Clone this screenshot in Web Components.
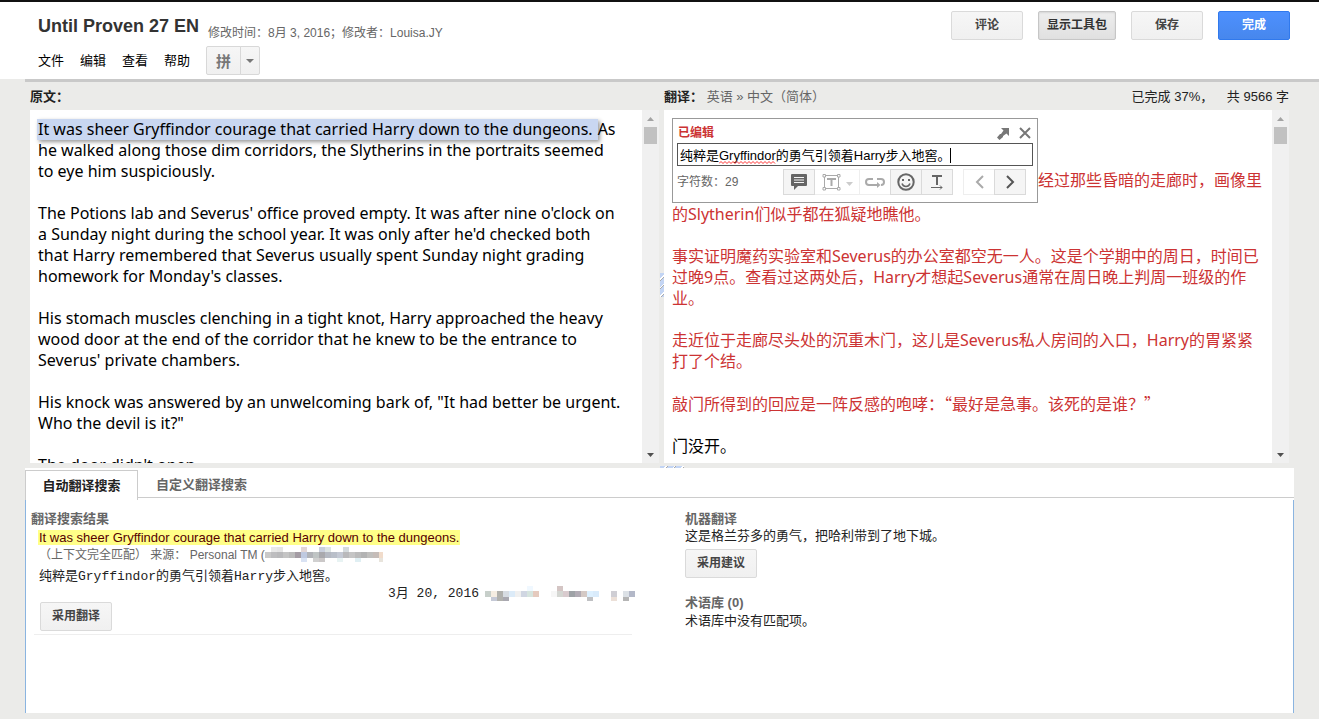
<!DOCTYPE html>
<html lang="zh-CN">
<head>
<meta charset="utf-8">
<title>Until Proven 27 EN</title>
<style>
  html, body { margin: 0; height: 100%; }
  body {
    background: #ebebe9; color: #222; font: 13px/18px "Liberation Sans", "Noto Sans CJK SC", sans-serif;
    --line: #ccc; --muted: #666; --red: #cc3333;
  }
</style>
</head>
<body>
<translator-app></translator-app>

<script>
const define = (name, html, setup) => customElements.define(name, class extends HTMLElement {
  constructor() {
    super();
    const t = document.createElement('template');
    t.innerHTML = html;
    this.attachShadow({ mode: 'open' }).append(t.content.cloneNode(true));
  }
  connectedCallback() { if (setup) setup(this, this.shadowRoot); }
});

/* Standard push button; kind = "primary" | "pressed" */
define('push-button', `
<style>
  :host { display: block; }
  button {
    box-sizing: border-box; display: block; min-width: 72px; height: 29px; padding: 0 8px;
    border: 1px solid #dadada; border-radius: 2px; color: #444;
    background: linear-gradient(#f6f6f6, #f0f0f0);
    font: bold 12px/27px "Liberation Sans", "Noto Sans CJK SC", sans-serif; white-space: nowrap;
  }
  :host([kind=pressed]) button {
    border-color: #c6c6c6; color: #333; background: linear-gradient(#eee, #e0e0e0);
    box-shadow: inset 0 1px 2px rgba(0,0,0,.1);
  }
  :host([kind=primary]) button {
    border-color: #3079ed; color: #fff; background: linear-gradient(#4d90fe, #4787ed);
  }
</style>
<button type="button"><slot></slot></button>`);

define('doc-header', `
<style>
  :host { display: flex; justify-content: space-between; align-items: flex-start;
    box-sizing: border-box; min-height: 79px; border-top: 2px solid #111; background: #fff;
    padding: 9px 29px 4px 38px; }
  .title { display: flex; align-items: baseline; gap: 9px; margin-top: 4px; height: 31px; }
  h1 { margin: 0; font: bold 18px/22px "Liberation Sans", sans-serif; color: #333; }
  .meta { font-size: 12px; color: var(--muted); position: relative; top: 5px; }
  nav { display: flex; align-items: center; gap: 16px; }
  nav a { color: #000; text-decoration: none; }
  .ime { display: flex; }
  .ime button { box-sizing: border-box; height: 29px; padding: 0; border: 1px solid #d8d8d8;
    background: linear-gradient(#f6f6f6, #f0f0f0); color: #777; border-radius: 2px 0 0 2px;
    width: 35px; font: bold 15px/24px "Noto Sans CJK SC", sans-serif; }
  .ime button + button { width: 20px; margin-left: -1px; border-radius: 0 2px 2px 0; }
  .ime svg { display: block; margin: auto; }
  .actions { display: flex; gap: 15px; }
</style>
<div>
  <div class="title"><h1>Until Proven 27 EN</h1><span class="meta">修改时间&#xFF1A;8月 3, 2016&#xFF1B;修改者&#xFF1A;Louisa.JY</span></div>
  <nav>
    <a href="#file">文件</a><a href="#edit">编辑</a><a href="#view">查看</a><a href="#help">帮助</a>
    <span class="ime"><button type="button">拼</button><button type="button" aria-label="输入法"><svg width="8" height="4"><path d="M0 0h8L4 4z" fill="#777"/></svg></button></span>
  </nav>
</div>
<div class="actions">
  <push-button>评论</push-button><push-button kind="pressed">显示工具包</push-button>
  <push-button>保存</push-button><push-button kind="primary">完成</push-button>
</div>`);

define('scroll-track', `
<style>
  :host { display: flex; flex-direction: column; align-items: center; box-sizing: border-box;
    width: 17px; padding: 7px 0 6px; background: #f0f0f0; }
  i { width: 13px; height: 17px; margin: 6px 0 auto; background: #c1c1c1; }
</style>
<svg width="7" height="4"><path d="M0 4h7L3.5 0z" fill="#a3a3a3"/></svg><i></i>
<svg width="7" height="4"><path d="M0 0h7L3.5 4z" fill="#505050"/></svg>`);

define('text-pane', `
<style>
  :host { display: flex; flex-direction: column; min-width: 0; min-height: 0; }
  .head { display: flex; justify-content: space-between; box-sizing: border-box; height: 28px; padding-top: 1px; line-height: 28px; white-space: nowrap; }
  .view { display: flex; flex: 1; min-height: 0; background: #fff; }
  .text { flex: 1; min-width: 0; overflow: hidden; padding: 9px 0 0 8px; color: #000;
    font: 16px/21px "Noto Sans", "Noto Sans CJK SC", sans-serif; white-space: nowrap; }
</style>
<div class="head"><slot name="label"></slot><slot name="status"></slot></div>
<div class="view"><div class="text"><slot></slot></div><scroll-track></scroll-track></div>`);

define('segment-editor', `
<style>
  :host { display: inline-block; margin: -1px 0 1px; box-sizing: border-box; width: 366px; height: 85px;
    border: 1px solid #999; padding: 4px; background: #fff; white-space: nowrap;
    font: 12px/18px "Liberation Sans", "Noto Sans CJK SC", sans-serif; color: var(--muted); }
  .row { display: flex; align-items: center; }
  .top { height: 20px; gap: 9px; padding: 0 2px 0 1px; }
  label { flex: 1; font-weight: bold; color: var(--red); }
  button { box-sizing: border-box; padding: 0; border: 0; background: none; display: grid; place-items: center; }
  .field { position: relative; }
  input { display: block; box-sizing: border-box; width: 100%; height: 23px; padding: 0 2px;
    border: 1px solid #555; outline: 0; border-radius: 0; background: #fff; color: #000;
    font: 13px/20px "Liberation Sans", "Noto Sans CJK SC", sans-serif; }
  .wave { position: absolute; left: 42px; top: 18px; }
  .caret { position: absolute; left: 273px; top: 5px; width: 1px; height: 15px; background: #000; }
  .tools { margin-top: 3px; padding-right: 7px; }
  .count { flex: 1; }
  .group { display: flex; margin-left: 11px; }
  .group button { width: 32px; height: 26px; margin-left: -1px; border: 1px solid #eee; }
  .group .on { border-color: #dadada; background: #f5f5f5; position: relative; }
  .group .wide { width: 46px; }
</style>
<div class="row top">
  <label for="seg">已编辑</label>
  <button type="button" aria-label="展开"><svg width="13" height="13"><path d="M4 1h8v8L9.500 6.500 6 9v1l-3.500 3L0 10.500 3 7h1l2.500-3.500z" fill="#777"/></svg></button>
  <button type="button" aria-label="关闭"><svg width="12" height="12"><path d="M1 1l10 10M11 1L1 11" stroke="#777" stroke-width="2"/></svg></button>
</div>
<div class="field">
  <input id="seg" value="纯粹是Gryffindor的勇气引领着Harry步入地窖。" spellcheck="false">
  <svg class="wave" width="57" height="3"><path d="M0 2.5l2-2 2 2 2-2 2 2 2-2 2 2 2-2 2 2 2-2 2 2 2-2 2 2 2-2 2 2 2-2 2 2 2-2 2 2 2-2 2 2 2-2 2 2 2-2 2 2 2-2 2 2 2-2 2 2" fill="none" stroke="#f33" stroke-width="1"/></svg>
  <span class="caret"></span>
</div>
<div class="row tools">
  <span class="count">字符数&#xFF1A;29</span>
  <span class="group">
    <button type="button" class="on" aria-label="评论"><svg width="16" height="16"><path d="M1 0h14q1 0 1 1v10q0 1-1 1H7l-4 4v-4H1q-1 0-1-1V1q0-1 1-1z" fill="#666"/><path d="M3 3.500h10M3 6h10M3 8.500h10" stroke="#f5f5f5"/></svg></button>
    <button type="button" class="wide" aria-label="标记"><svg width="31" height="18" fill="none" stroke="#aaa"><path d="M3.500 2.500h12M3.500 15.500h12M2.500 3v12M16.500 3v12"/><path d="M1 1.500h2.500v2.500H1zM15.500 1.500h2.500v2.500h-2.500zM1 14.500h2.500v2.500H1zM15.500 14.500h2.500v2.500h-2.500z" fill="#fff"/><path d="M5 6h9M9.500 6v7" stroke-width="2"/><path d="M24 9h7l-3.500 4z" fill="#ccc" stroke="none"/></svg></button>
    <button type="button" aria-label="合并"><svg width="20" height="12" fill="none" stroke="#aaa" stroke-width="2"><path d="M8 3H4Q1 3 1 6t3 3h9M12 3h4q3 0 3 3t-3 3"/><path d="M12 6v6l3.500-3z" fill="#aaa" stroke="none"/></svg></button>
    <button type="button" class="on" aria-label="表情"><svg width="18" height="18" fill="none" stroke="#666" stroke-width="2"><circle cx="9" cy="9" r="7.700"/><path d="M5 10.500q1 3 4 3t4-3" stroke-width="1.500"/><path d="M5 7h2M11 7h2"/></svg></button>
    <button type="button" class="on" aria-label="文字方向"><svg width="14" height="16" fill="none" stroke="#666"><path d="M2 2h10M7 2v9" stroke-width="2"/><path d="M1 13.500h11M10 11.500l2 2-2 2"/></svg></button>
  </span>
  <span class="group">
    <button type="button" aria-label="上一个"><svg width="9" height="14" fill="none" stroke="#aaa" stroke-width="2"><path d="M8 1L2 7l6 6"/></svg></button>
    <button type="button" class="on" aria-label="下一个"><svg width="9" height="14" fill="none" stroke="#555" stroke-width="2"><path d="M1 1l6 6-6 6"/></svg></button>
  </span>
</div>`);

/* Row of colour blocks hiding a personal name. Each cell: "column,row,colour". */
define('masked-name', `<style>:host { display: inline-block; } svg { display: block; }</style><svg aria-hidden="true"></svg>`,
  (el, root) => {
    const svg = root.querySelector('svg');
    const cells = el.getAttribute('cells').split(' ').map(c => c.split(','));
    svg.setAttribute('width', el.getAttribute('width'));
    svg.setAttribute('height', 16);
    const y = [0, 5, 11], h = [5, 6, 4];
    svg.innerHTML = cells.map(([c, r, f]) => `<rect x="${c * 6}" y="${y[r]}" width="6" height="${h[r]}" fill="#${f}"/>`).join('');
  });

define('tool-kit', `
<style>
  :host { display: flex; flex-direction: column; box-sizing: border-box; min-height: 245px; background: #fff; padding-top: 2px; }
  .tabs { display: flex; height: 30px; }
  .tabs button { box-sizing: border-box; border: 0; background: none; padding: 0 15px;
    font: bold 13px/30px "Liberation Sans", "Noto Sans CJK SC", sans-serif; color: var(--muted); white-space: nowrap; }
  .tabs .sel { width: 113px; border: 1px solid var(--line); border-bottom: 0; color: #222; }
  .rest { flex: 1; height: 28px; box-sizing: border-box; border-bottom: 1px solid var(--line); padding-left: 3px; }
  .body { flex: 1; display: grid; grid-template-columns: 654fr 613fr; border: solid #8ab4e0; border-width: 0 1px; padding-top: 10px; }
  h2 { margin: 0; font-size: 13px; line-height: 18px; color: var(--muted); }
  .results { padding-left: 5px; }
  .hit { margin: 0 48px 0 3px; padding: 2px 0 3px 5px; border-bottom: 1px solid #eee; }
  mark { display: block; width: fit-content; background: #ffff88; color: #500; line-height: 15px; margin: 0 0 1px -1px; padding: 0 1px; white-space: nowrap; }
  .src { display: flex; align-items: center; font-size: 12px; color: var(--muted); line-height: 18px; white-space: pre; }
  .mono { font-family: "Liberation Mono", "Noto Sans CJK SC", monospace; line-height: 18px; white-space: nowrap; }
  .src + .mono { margin-top: 4px; }
  .by { display: flex; justify-content: flex-end; align-items: center; gap: 6px; margin: -1px -3px 0 0; line-height: 17px; }
  .side { padding-left: 5px; }
  push-button { margin: 0 0 0 1px; }
  .side push-button { margin: 3px 0 16px; }
</style>
<div class="tabs" role="tablist">
  <button type="button" class="sel" role="tab" aria-selected="true">自动翻译搜索</button>
  <div class="rest"><button type="button" role="tab">自定义翻译搜索</button></div>
</div>
<div class="body">
  <section class="results">
    <h2>翻译搜索结果</h2>
    <div class="hit">
      <mark>It was sheer Gryffindor courage that carried Harry down to the dungeons.</mark>
      <div class="src">&#xFF08;上下文完全匹配&#xFF09; 来源&#xFF1A; Personal TM (<masked-name width="118" cells="0,1,c9c9c9 1,1,bdbdbf 2,1,b9b9bb 3,1,c4c4c4 4,1,bababa 5,1,a49ca4 6,1,bfc9e0 7,1,b1b3b8 8,1,bfc4c4 9,1,a9a9ad 10,1,b5b9c2 11,1,b9bfc9 12,1,c4c9d4 13,1,b9b9bb 14,1,c5c5c5 15,1,bbbbbb 16,1,b3b3b3 17,1,c0bfbd 18,1,c5bcb8 19,1,f1dccb 1,0,e8e8e8 2,0,e4e4e4 6,0,e2d6d6 9,0,c9cfdd 10,0,dde4e4 13,0,d4dadd 6,2,d9e2f3 8,2,d0d0d0 9,2,cbc8c8 12,2,e8f3f3 15,2,e0eff3 19,2,e8e4dc"></masked-name></div>
      <div class="mono">纯粹是Gryffindor的勇气引领着Harry步入地窖。</div>
      <div class="mono by">3月 20, 2016<masked-name width="150" cells="0,1,c7cfca 1,1,f5ede2 2,1,b1b1ad 3,1,d7dce2 4,1,dcebf8 5,1,f0f0f0 6,1,d0d6e2 7,1,d6e4de 8,1,e5cabe 7,0,f0f8ff 1,2,c5c9d6 2,2,b1b1ad 3,2,a9a8b0 11,1,f6f6f6 12,1,d4d6d2 13,1,d9cbce 14,1,9ea2a6 15,1,b1abb4 16,1,d4c9c5 17,1,ddf0ff 18,1,d9ebfb 12,0,d4c5c4 17,2,bfc0c3 21,1,cfced4 21,2,ece0d8 23,1,dce1e6 24,1,b3b8c8 23,2,b5b5b5"></masked-name></div>
      <push-button>采用翻译</push-button>
    </div>
  </section>
  <section class="side">
    <h2>机器翻译</h2>
    <div class="mono">这是格兰芬多的勇气&#xFF0C;把哈利带到了地下城。</div>
    <push-button>采用建议</push-button>
    <h2>术语库 (0)</h2>
    <div>术语库中没有匹配项。</div>
  </section>
</div>`);

define('translator-app', `
<style>
  :host { display: flex; flex-direction: column; height: 100vh; min-height: 600px; overflow: hidden; }
  main { flex: 1; min-height: 0; display: flex; flex-direction: column; margin-left: 25px; padding: 0 25px 6px 0; }
  .rule { height: 3px; background: #c9c9c9; margin-right: -25px; flex: none; }
  .panes { flex: 1; min-height: 0; display: grid; grid-template: minmax(0, 1fr) / 629fr 625fr; gap: 5px; padding: 0 5px; margin-bottom: 5px; position: relative; }
  p { margin: 0 0 21px; }
  .red { color: var(--red); }
  .cur { background: #c9d7f1; box-shadow: 2px 2px 4px #999; margin-left: -1px; padding: 0 5px 0 1px; display: inline-block; }
  .dim { color: var(--muted); }
  .cjk { font-family: "Noto Sans CJK SC", sans-serif; }
  .grip { position: absolute; background: repeating-linear-gradient(135deg, #c3d5f4 0 4px, #fff 4px 5px, #aaa 5px 6px); }
  .grip.v { left: 635px; top: 191px; width: 4px; height: 24px; }
  .grip.h { left: 635px; bottom: -5px; width: 24px; height: 2px; }
  .gap { margin-left: 10px; }
</style>
<doc-header></doc-header>
<main>
  <div class="rule"></div>
  <div class="panes">
    <text-pane>
      <b slot="label">原文&#xFF1A;</b>
      <p><span class="cur">It was sheer Gryffindor courage that carried Harry down to the dungeons.</span>As<br>he walked along those dim corridors, the Slytherins in the portraits seemed<br>to eye him suspiciously.</p>
      <p>The Potions lab and Severus' office proved empty. It was after nine o'clock on<br>a Sunday night during the school year. It was only after he'd checked both<br>that Harry remembered that Severus usually spent Sunday night grading<br>homework for Monday's classes.</p>
      <p>His stomach muscles clenching in a tight knot, Harry approached the heavy<br>wood door at the end of the corridor that he knew to be the entrance to<br>Severus' private chambers.</p>
      <p>His knock was answered by an unwelcoming bark of, "It had better be urgent.<br>Who the devil is it?"</p>
      <p>The door didn't open.</p>
    </text-pane>
    <text-pane>
      <span slot="label"><b>翻译&#xFF1A;</b> <span class="dim">英语 » 中文&#xFF08;简体&#xFF09;</span></span>
      <span slot="status">已完成 37%&#xFF0C; <span class="gap">共 9566 字</span></span>
      <p class="red"><segment-editor></segment-editor>经过那些昏暗的走廊时&#xFF0C;画像里<br>的Slytherin们似乎都在狐疑地瞧他。</p>
      <p class="red">事实证明魔药实验室和Severus的办公室都空无一人。这是个学期中的周日&#xFF0C;时间已<br>过晚9点。查看过这两处后&#xFF0C;Harry才想起Severus通常在周日晚上判周一班级的作<br>业。</p>
      <p class="red">走近位于走廊尽头处的沉重木门&#xFF0C;这儿是Severus私人房间的入口&#xFF0C;Harry的胃紧紧<br>打了个结。</p>
      <p class="red">敲门所得到的回应是一阵反感的咆哮&#xFF1A;<span class="cjk">&#x201C;</span>最好是急事。该死的是谁&#xFF1F;<span class="cjk">&#x201D;</span></p>
      <p>门没开。</p>
    </text-pane>
    <span class="grip v"></span><span class="grip h"></span>
  </div>
  <tool-kit></tool-kit>
</main>`);
</script>
</body>
</html>
